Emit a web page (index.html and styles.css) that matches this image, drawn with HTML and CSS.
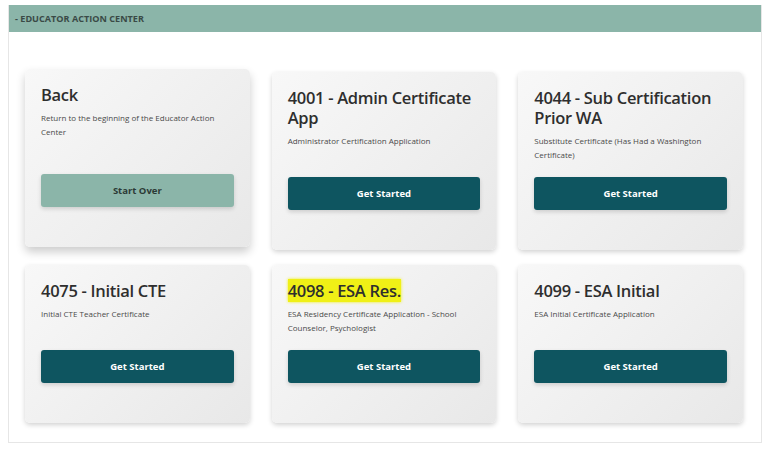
FILE: index.html
```html
<!DOCTYPE html>
<html lang="en">
<head>
  <meta charset="UTF-8">
  <meta name="viewport" content="width=device-width, initial-scale=1.0">
  <title>Educator Action Center</title>
  <link rel="stylesheet" href="styles.css">
</head>
<body>
  <div class="panel">
    <div class="panel-header">- Educator Action Center</div>
    <div class="panel-body">
      <div class="card-grid">
        <div class="card card-raised">
          <h3>Back</h3>
          <p>Return to the beginning of the Educator Action Center</p>
          <button class="btn btn-light">Start Over</button>
        </div>

        <div class="card">
          <h3>4001 - Admin Certificate App</h3>
          <p>Administrator Certification Application</p>
          <button class="btn">Get Started</button>
        </div>

        <div class="card">
          <h3>4044 - Sub Certification Prior WA</h3>
          <p>Substitute Certificate (Has Had a Washington Certificate)</p>
          <button class="btn">Get Started</button>
        </div>

        <div class="card">
          <h3>4075 - Initial CTE</h3>
          <p>Initial CTE Teacher Certificate</p>
          <button class="btn">Get Started</button>
        </div>

        <div class="card">
          <h3><span class="highlight">4098 - ESA Res.</span></h3>
          <p>ESA Residency Certificate Application - School Counselor, Psychologist</p>
          <button class="btn">Get Started</button>
        </div>

        <div class="card">
          <h3>4099 - ESA Initial</h3>
          <p>ESA Initial Certificate Application</p>
          <button class="btn">Get Started</button>
        </div>
      </div>
    </div>
  </div>
</body>
</html>
```

FILE: styles.css
```css
:root {
  --sage: #8bb5a9;
  --teal: #0e5560;
  --text-color: #333;
}

body {
  margin: 0;
  padding: 5px 6px 8px 8px;
  font-family: 'Open Sans', 'Segoe UI', sans-serif;
  background: #fff;
  color: var(--text-color);
}

.panel {
  width: 752px;
  border: 1px solid #e6e6e6;
  border-top: none;
}

.panel-header {
  background: var(--sage);
  height: 27px;
  line-height: 27px;
  padding-left: 6px;
  font-size: 9.1px;
  font-weight: 700;
  text-transform: uppercase;
  color: #3a4a46;
}

.panel-body {
  padding: 40px 18px 19px 16px;
}

.card-grid {
  display: grid;
  grid-template-columns: repeat(3, 1fr);
  column-gap: 22px;
  row-gap: 15px;
}

.card {
  display: flex;
  flex-direction: column;
  padding: 16px 16px 40px;
  border-radius: 5px;
  background: linear-gradient(135deg, #f8f8f8 0%, #e8e8e8 100%);
  box-shadow: 0 2px 5px rgba(0, 0, 0, 0.18);
}

.card-raised {
  transform: translateY(-3px);
  box-shadow: 0 5px 10px rgba(0, 0, 0, 0.2);
}

.card h3 {
  margin: 0;
  font-size: 16.5px;
  line-height: 20px;
  font-weight: 600;
  letter-spacing: -0.3px;
  color: #2e2e2e;
}

.card p {
  margin: 6px 0 15px;
  font-size: 8px;
  line-height: 14px;
  color: #4a4a4a;
}

.highlight {
  background: #f0f016;
  box-shadow: 0 0 3px #f0f016;
}

.btn {
  margin-top: auto;
  height: 33px;
  border: none;
  border-radius: 3px;
  background: var(--teal);
  color: #fff;
  font-family: inherit;
  font-size: 9.5px;
  font-weight: 700;
  box-shadow: 0 2px 4px rgba(0, 0, 0, 0.15);
  cursor: pointer;
}

.btn-light {
  background: var(--sage);
  color: #2b3a36;
}
```
